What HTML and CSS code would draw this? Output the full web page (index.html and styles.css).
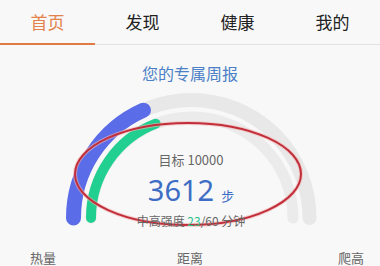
FILE: index.html
```html
<!DOCTYPE html>
<html lang="zh">
<head>
<meta charset="utf-8">
<link rel="stylesheet" href="styles.css">
</head>
<body>
<div class="page">
  <nav class="tabs">
    <div class="tab active">首页</div>
    <div class="tab">发现</div>
    <div class="tab">健康</div>
    <div class="tab">我的</div>
  </nav>
  <div class="title">您的专属周报</div>
  <div class="chart">
    <svg class="rings" width="380" height="150" viewBox="0 0 380 150">
      <path d="M 73.5 134 A 118 118 0 0 1 309.5 134" fill="none" stroke="#e8e8e8" stroke-width="14" stroke-linecap="round"/>
      <path d="M 91 134 A 101 101 0 0 1 293 134" fill="none" stroke="#ebebeb" stroke-width="11" stroke-linecap="round"/>
      <path d="M 73.5 134 A 118 118 0 0 1 143.5 26.2" fill="none" stroke="#5a6ce8" stroke-width="15" stroke-linecap="round"/>
      <path d="M 91 134 A 101 101 0 0 1 155.8 39.7" fill="none" stroke="#21cf90" stroke-width="10" stroke-linecap="round"/>
      <ellipse cx="188" cy="90" rx="113" ry="51" fill="none" stroke="#f2b5b5" stroke-width="4" opacity="0.6"/>
      <ellipse cx="188" cy="90" rx="113" ry="51" fill="none" stroke="#c22f3a" stroke-width="2"/>
    </svg>
    <div class="center">
      <div class="goal">目标 10000</div>
      <div class="steps"><span class="num">3612</span><span class="unit">步</span></div>
      <div class="intensity">中高强度 <span class="green">23</span>/60 分钟</div>
    </div>
  </div>
  <div class="stats">
    <div class="stat s1">热量</div>
    <div class="stat s2">距离</div>
    <div class="stat s3">爬高</div>
  </div>
</div>
</body>
</html>
```
FILE: styles.css
```css
* { box-sizing: border-box; }
html, body {
  margin: 0;
  padding: 0;
  background: #f8f8f8;
  font-family: "Noto Sans CJK SC", "Noto Sans", sans-serif;
  overflow: hidden;
}
.page {
  width: 380px;
  height: 266px;
  display: flex;
  flex-direction: column;
}
.tabs {
  display: flex;
  height: 45px;
  border-bottom: 1px solid #e2e2e2;
}
.tab {
  width: 95px;
  text-align: center;
  font-size: 17px;
  line-height: 43px;
  color: #222;
}
.tab.active {
  color: #e4824c;
  border-bottom: 2px solid #e07b45;
  margin-bottom: -1px;
}
.title {
  margin-top: 17px;
  text-align: center;
  font-size: 16px;
  line-height: 22px;
  color: #4b80c6;
  height: 28px;
}
.chart {
  display: grid;
  height: 150px;
}
.rings {
  grid-area: 1 / 1;
  display: block;
}
.center {
  grid-area: 1 / 1;
  align-self: start;
  padding-top: 68px;
  text-align: center;
  padding-left: 2px;
}
.goal {
  font-size: 13px;
  line-height: 16px;
  color: #666;
}
.steps {
  margin-top: 6px;
  line-height: 32px;
  height: 32px;
  color: #3d6dc4;
}
.num {
  font-size: 29px;
  font-family: "Noto Sans", sans-serif;
}
.unit {
  font-size: 13px;
  margin-left: 7px;
}
.intensity {
  margin-top: 8px;
  font-size: 12px;
  line-height: 14px;
  color: #666;
}
.green { color: #28c08a; }
.stats {
  display: flex;
  padding-left: 30px;
  margin-top: 15px;
}
.stat {
  font-size: 13px;
  line-height: 18px;
  color: #666;
}
.s2 { margin-left: 121px; }
.s3 { margin-left: 135px; }
```
